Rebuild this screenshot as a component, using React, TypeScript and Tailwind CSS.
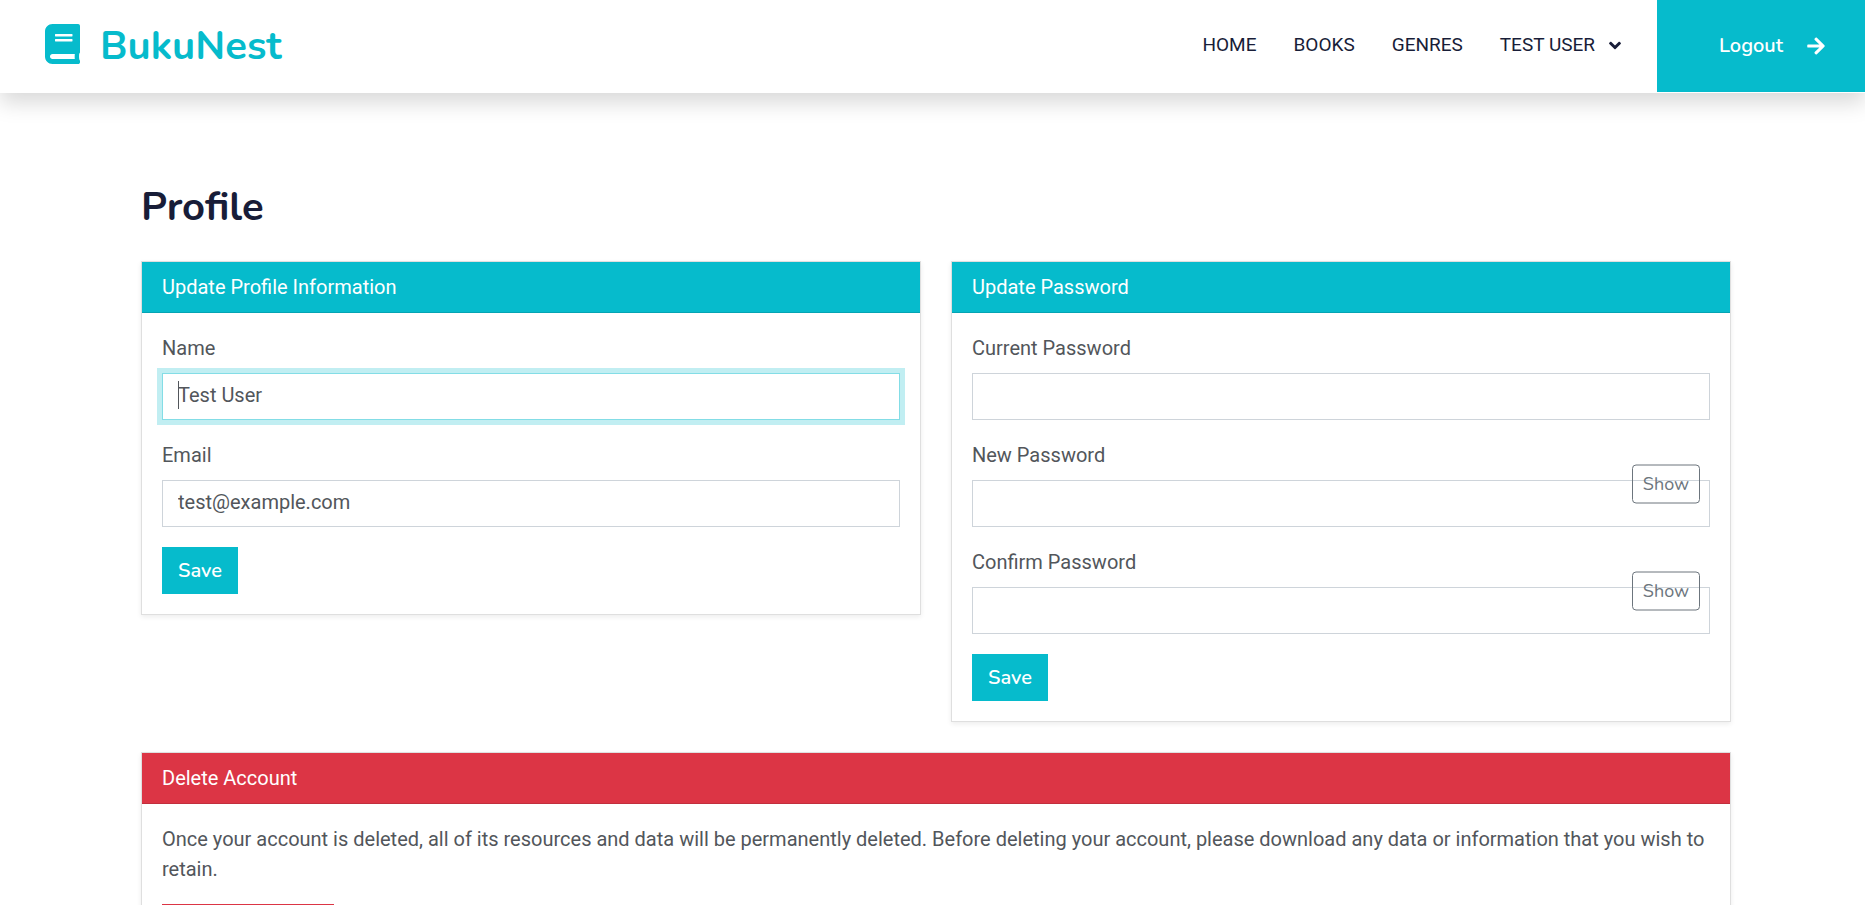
import { useState } from "react";
import type { ReactNode, InputHTMLAttributes } from "react";
import { FaAngleDown, FaArrowRight, FaBook } from "react-icons/fa";

const links = ["Home", "Books", "Genres"];

function Navbar() {
  return (
    <header className="relative flex h-[93px] items-start justify-between bg-white shadow-[0_10px_20px_rgba(0,0,0,0.15)]">
      <a
        href="#"
        className="flex h-[92px] items-center gap-5 pl-[45px] font-['Nunito','Lato',sans-serif] text-[40px] font-bold leading-12 text-[#06bbcc]"
      >
        <FaBook className="mb-1 h-10 w-[35px]" aria-hidden="true" />
        <span>BukuNest</span>
      </a>
      <div className="flex h-[92px] items-stretch">
        <nav className="mr-9 flex items-center gap-[37px] pb-[2px] text-[19px] uppercase text-[#181d38]">
          {links.map((link) => (
            <a key={link} href="#">
              {link}
            </a>
          ))}
          <button type="button" className="flex items-center gap-[14px] uppercase">
            Test User
            <FaAngleDown className="h-[19px] w-3" aria-hidden="true" />
          </button>
        </nav>
        <button
          type="button"
          className="flex w-[208px] items-center justify-end gap-6 bg-[#06bbcc] pr-10 font-['Nunito','Lato',sans-serif] text-xl font-semibold text-white"
        >
          Logout
          <FaArrowRight className="h-5 w-[18px]" aria-hidden="true" />
        </button>
      </div>
    </header>
  );
}

function Card({ title, danger, children }: { title: string; danger?: boolean; children: ReactNode }) {
  return (
    <section className="border border-[#dfdfdf] bg-white shadow-[0_2px_5px_rgba(0,0,0,0.075)]">
      <h2
        className={
          danger
            ? "border-b border-[#c12f3d] bg-[#dc3545] px-5 py-[10px] text-xl leading-[30px] text-white"
            : "border-b border-[#05a4b3] bg-[#06bbcc] px-5 py-[10px] text-xl leading-[30px] text-white"
        }
      >
        {title}
      </h2>
      <div className="flex flex-col items-start gap-5 p-5">{children}</div>
    </section>
  );
}

function Field({
  id,
  label,
  toggle,
  caret,
  ...input
}: { id: string; label: string; toggle?: boolean; caret?: boolean } & InputHTMLAttributes<HTMLInputElement>) {
  const [touched, setTouched] = useState(false);
  const release = () => setTouched(true);
  return (
    <div className="relative flex w-full flex-col gap-[10px]">
      <label htmlFor={id} className="leading-[30px]">
        {label}
      </label>
      <input
        id={id}
        className="h-[47px] w-full border border-[#ced4da] bg-white px-[15px] pb-1 outline-none focus:border-[#83dde6] focus:shadow-[0_0_0_5px_rgba(6,187,204,0.25)]"
        onKeyDown={release}
        onPointerDown={release}
        onBlur={release}
        {...input}
      />
      {caret && !touched && <span aria-hidden="true" className="absolute left-4 top-12 h-7 w-px bg-[#52565b]" />}
      {toggle && (
        <button
          type="button"
          className="absolute right-[10px] top-1/2 h-[39px] w-[68px] -translate-y-1/2 rounded border border-[#6c757d] font-['Nunito','Lato',sans-serif] text-lg leading-none text-[#6c757d]"
        >
          Show
        </button>
      )}
    </div>
  );
}

function SaveButton() {
  return (
    <button
      type="submit"
      className="h-[47px] w-[76px] bg-[#06bbcc] font-['Nunito','Lato',sans-serif] text-xl font-semibold text-white"
    >
      Save
    </button>
  );
}

export default function App() {
  return (
    <div className="min-h-screen bg-white font-['Roboto',sans-serif] text-xl text-[#52565b]">
      <Navbar />
      <main className="mx-auto w-full max-w-[1597px] pb-[30px] pl-[7px] pt-[90px]">
        <h1 className="mb-[30px] font-['Nunito','Lato',sans-serif] text-[40px] font-bold leading-12 text-[#181d38]">
          Profile
        </h1>
        <div className="grid grid-cols-2 items-start gap-[30px]">
          <Card title="Update Profile Information">
            <form className="contents">
              <Field id="name" label="Name" defaultValue="Test User" autoFocus caret />
              <Field id="email" label="Email" type="email" defaultValue="test@example.com" />
              <SaveButton />
            </form>
          </Card>
          <Card title="Update Password">
            <form className="contents">
              <Field id="current" label="Current Password" type="password" />
              <Field id="new" label="New Password" type="password" toggle />
              <Field id="confirm" label="Confirm Password" type="password" toggle />
              <SaveButton />
            </form>
          </Card>
          <div className="col-span-2">
            <Card title="Delete Account" danger>
              <p className="leading-[30px]">
                Once your account is deleted, all of its resources and data will be permanently deleted. Before deleting
                your account, please download any data or information that you wish to retain.
              </p>
              <button
                type="button"
                className="h-[47px] w-[172px] bg-[#dc3545] font-['Nunito','Lato',sans-serif] font-semibold text-white"
              >
                Delete Account
              </button>
            </Card>
          </div>
        </div>
      </main>
    </div>
  );
}
